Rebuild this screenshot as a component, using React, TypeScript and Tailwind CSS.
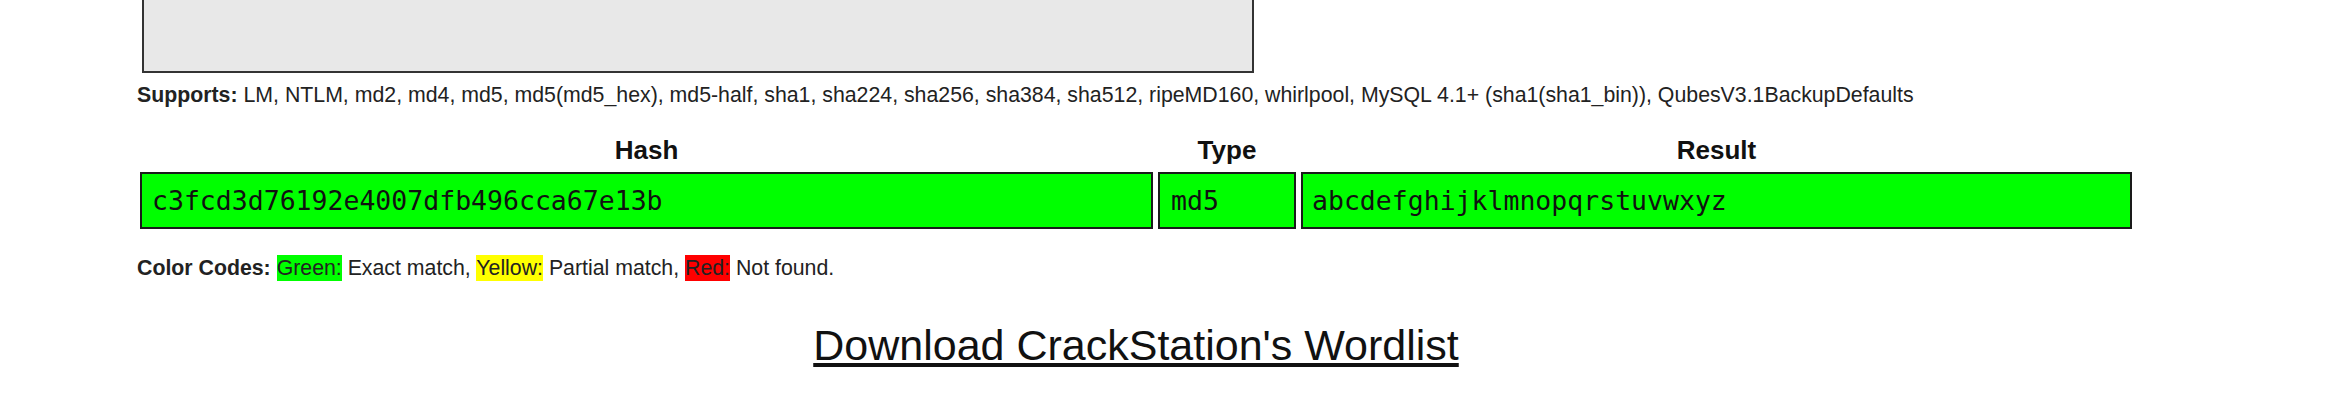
import React from "react";

export default function App() {
  const sans = { fontFamily: '"Liberation Sans", Arial, sans-serif' };
  return (
    <div className="w-[2330px] h-[400px] bg-white overflow-hidden text-[#222]" style={sans}>
      <div className="ml-[142px] w-[1112px] h-[73px] bg-[#e8e8e8] border-x-2 border-b-2 border-[#333]" />
      <div className="ml-[137px] mt-[10px] text-[21.3px] leading-[24px] whitespace-nowrap">
        <b>Supports:</b> LM, NTLM, md2, md4, md5, md5(md5_hex), md5-half, sha1, sha224, sha256, sha384, sha512, ripeMD160, whirlpool, MySQL 4.1+ (sha1(sha1_bin)), QubesV3.1BackupDefaults
      </div>
      <div className="ml-[140px] mt-[28px] w-[1992px] flex gap-[5px] text-[26px] leading-[30px] font-bold text-[#111]">
        <div className="w-[1013px] text-center">Hash</div>
        <div className="w-[138px] text-center">Type</div>
        <div className="w-[831px] text-center">Result</div>
      </div>
      <div
        className="ml-[140px] mt-[7px] w-[1992px] flex gap-[5px] text-[26.5px] text-[#111]"
        style={{ fontFamily: '"DejaVu Sans Mono", monospace' }}
      >
        <div className="w-[1013px] h-[57px] bg-[#00ff00] border-2 border-[#1a1a1a] pl-[10px] flex items-center">c3fcd3d76192e4007dfb496cca67e13b</div>
        <div className="w-[138px] h-[57px] bg-[#00ff00] border-2 border-[#1a1a1a] pl-[11px] flex items-center">md5</div>
        <div className="w-[831px] h-[57px] bg-[#00ff00] border-2 border-[#1a1a1a] pl-[9px] flex items-center">abcdefghijklmnopqrstuvwxyz</div>
      </div>
      <div className="ml-[137px] mt-[27px] text-[21.3px] leading-[24px] whitespace-nowrap">
        <b>Color Codes:</b> <span className="bg-[#00ff00] py-[1px]">Green:</span> Exact match, <span className="bg-[#ffff00] py-[1px]">Yellow:</span> Partial match, <span className="bg-[#ff0000] py-[1px]">Red:</span> Not found.
      </div>
      <div className="ml-[140px] w-[1992px] mt-[41px] text-center">
        <a href="#" className="text-[43px] leading-[49px] text-[#111] underline">Download CrackStation's Wordlist</a>
      </div>
    </div>
  );
}
